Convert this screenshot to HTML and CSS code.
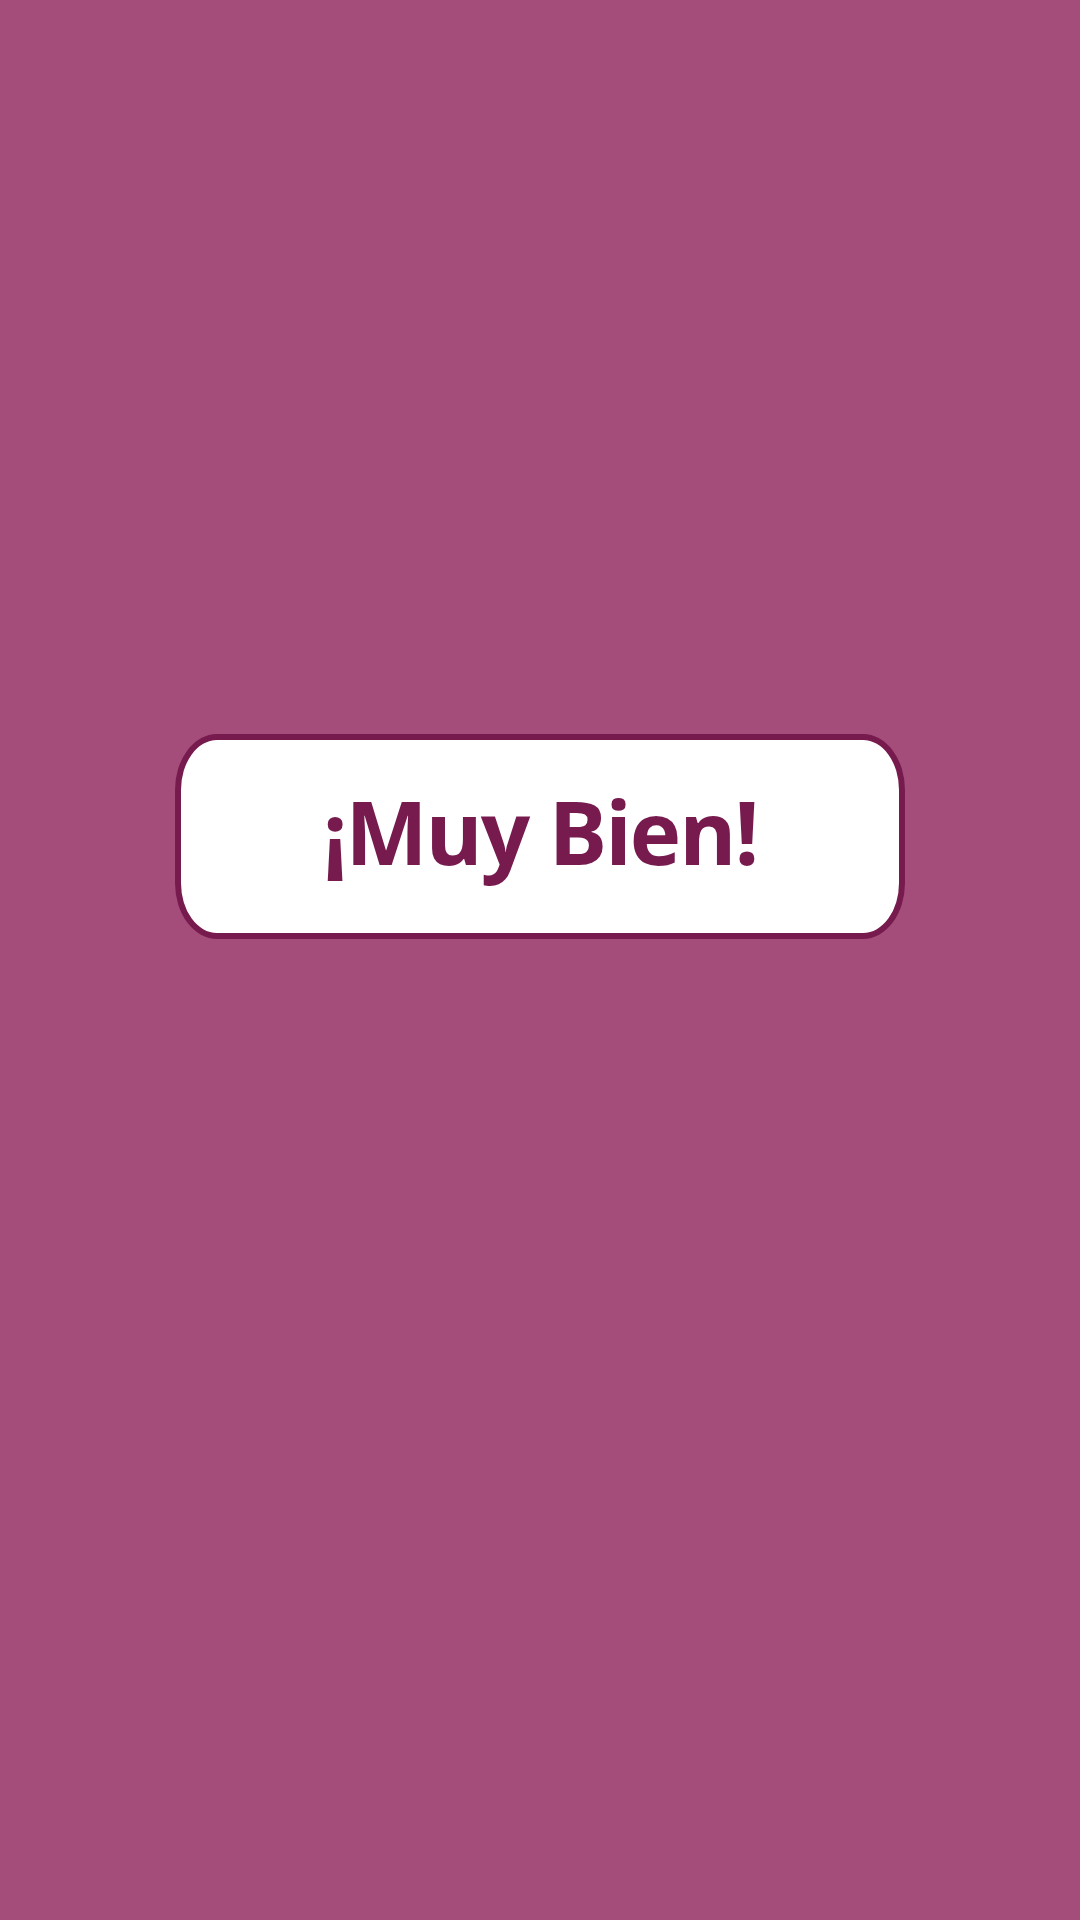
FILE: index.html
```html
<!DOCTYPE html>
<html lang="es">
<head>
<meta charset="utf-8">
<link rel="stylesheet" href="styles.css">
</head>
<body>
<main class="screen">
  <div class="badge"><span class="label">¡Muy Bien!</span></div>
</main>
</body>
</html>
```

FILE: styles.css
```css
html, body {
  margin: 0;
  padding: 0;
  background: #a54d7a;
}
.screen {
  width: 1080px;
  height: 1920px;
  box-sizing: border-box;
  padding-top: 734px;
  display: flex;
  flex-direction: column;
  align-items: center;
}
.badge {
  width: 730px;
  height: 205px;
  box-sizing: border-box;
  padding-bottom: 10px;
  background: #ffffff;
  border: 6px solid #771a4e;
  border-radius: 42px / 56px;
  display: flex;
  align-items: center;
  justify-content: center;
}
.label {
  font-family: "Open Sans", "Noto Sans", sans-serif;
  font-weight: 700;
  font-size: 87px;
  color: #771a4e;
  line-height: 1;
  letter-spacing: -2px;
}
```
